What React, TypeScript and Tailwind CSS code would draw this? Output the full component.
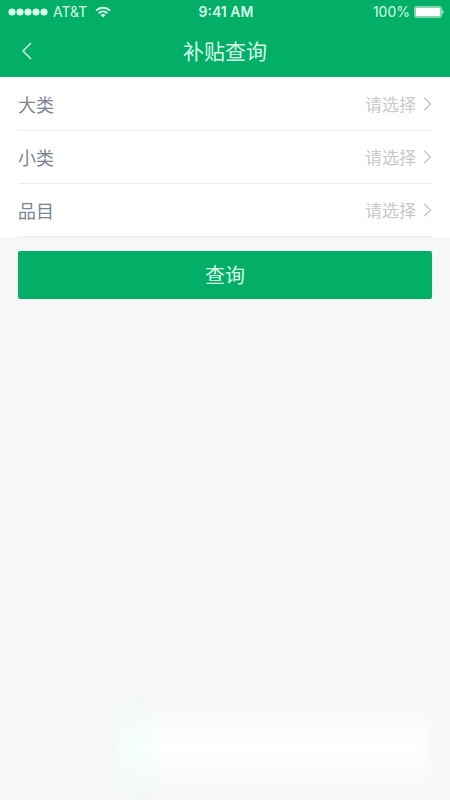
import { useState } from "react";

const FIELDS = [
  { id: "category", label: "大类", options: ["拖拉机", "收获机械"] },
  { id: "subcategory", label: "小类", options: ["轮式拖拉机", "履带式拖拉机"] },
  { id: "item", label: "品目", options: ["小型", "中型", "大型"] },
];

function StatusBar() {
  return (
    <div className="grid h-6 grid-cols-3 items-center pr-1.5 pl-2 font-['Inter',sans-serif] text-sm text-[#d5ffe9]">
      <div className="flex items-center gap-1">
        <svg width="41" height="8" viewBox="0 0 41 8" fill="currentColor" aria-hidden="true">
          {[4, 12, 20, 28, 36].map((cx) => (
            <circle key={cx} cx={cx} cy="4" r="3.6" />
          ))}
        </svg>
        <span>AT&amp;T</span>
        <svg className="ml-1" width="16" height="12" viewBox="0 0 16 12" fill="none" stroke="currentColor" strokeWidth="1.9" aria-hidden="true">
          <path d="M1 4.6C5 0.8 11 0.8 15 4.6" />
          <path d="M3.6 7.3C6.2 4.9 9.8 4.9 12.4 7.3" />
          <path d="M8 11.4L5.5 9C6.9 7.7 9.1 7.7 10.5 9Z" fill="currentColor" stroke="none" />
        </svg>
      </div>
      <span className="text-center font-semibold">9:41 AM</span>
      <div className="flex items-center justify-end gap-1">
        <span>100%</span>
        <svg width="30" height="12" viewBox="0 0 30 12" aria-hidden="true">
          <rect x="0.5" y="0.5" width="27" height="11" rx="1.5" fill="none" stroke="#7fdcae" />
          <rect x="1.5" y="1.5" width="25" height="9" rx="0.5" fill="#fff" />
          <path d="M28.2 4C30 4.4 30 7.6 28.2 8Z" fill="#c5f7df" />
        </svg>
      </div>
    </div>
  );
}

export default function App() {
  const [values, setValues] = useState<Record<string, string>>({});

  return (
    <div className="relative min-h-screen overflow-hidden bg-[#f5f7f9] font-['Noto_Sans_CJK_SC',sans-serif]">
      <header className="bg-[#03ae66]">
        <StatusBar />
        <div className="grid h-[53px] grid-cols-[54px_1fr_54px] items-center">
          <button type="button" aria-label="返回" className="flex h-full items-center justify-center text-[#d5ffe9]">
            <svg width="10" height="18" viewBox="0 0 10 18" fill="none" stroke="currentColor" strokeWidth="1.5" aria-hidden="true">
              <path d="M9 1L1 9L9 17" />
            </svg>
          </button>
          <h1 className="text-center text-[21px] text-[#d5ffe9]">补贴查询</h1>
        </div>
      </header>

      <form onSubmit={(e) => e.preventDefault()}>
        <div className="bg-white px-[18px] pt-px">
          {FIELDS.map(({ id, label, options }) => (
            <div key={id} className="flex h-[53px] items-center border-b border-[#ebedef]">
              <label htmlFor={id} className="text-lg text-[#7a8591]">{label}</label>
              <div className="relative h-full flex-1">
                <select
                  id={id}
                  value={values[id] ?? ""}
                  onChange={(e) => setValues({ ...values, [id]: e.target.value })}
                  className="h-full w-full appearance-none bg-transparent pr-4 text-right text-[17px] text-[#cacaca] outline-none"
                >
                  <option value="">请选择</option>
                  {options.map((o) => (
                    <option key={o} value={o}>{o}</option>
                  ))}
                </select>
                <svg className="pointer-events-none absolute inset-y-0 right-0 my-auto" width="9" height="14" viewBox="0 0 9 14" fill="none" stroke="#c4c4c4" strokeWidth="1.3" aria-hidden="true">
                  <path d="M1 0.8L7.6 7L1 13.2" />
                </svg>
              </div>
            </div>
          ))}
        </div>
        <div className="px-[18px] pt-[14px]">
          <button type="submit" className="h-12 w-full rounded-xs bg-[#03ae66] text-xl text-[#d5ffe9]">
            查询
          </button>
        </div>
      </form>

      {/* soft glow at the foot of the page */}
      <div className="pointer-events-none absolute right-5 bottom-3 flex h-20 w-[69%] blur-[6px]">
        <div className="w-8 bg-linear-to-b from-[#f5fdfc]/20 via-[#f5fffd] to-[#f5fdfc]/20" />
        <div className="flex-1 bg-linear-to-b from-white/30 via-white to-white/20" />
      </div>
    </div>
  );
}
